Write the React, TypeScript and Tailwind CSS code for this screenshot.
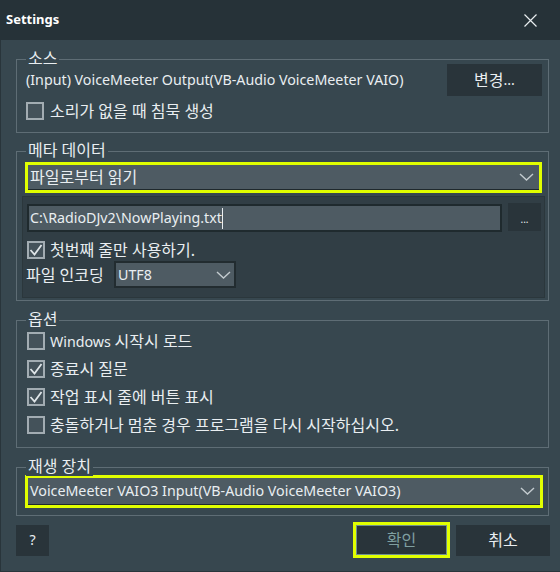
const FONT = "font-['Noto_Sans','Noto_Sans_CJK_KR',sans-serif]";

// Hangul in the reference runs a bit larger than the Latin text
function K({ children }: { children: React.ReactNode }) {
  return <span className="text-[16px]">{children}</span>;
}

function Check({ checked }: { checked?: boolean }) {
  return (
    <div className="w-[18px] h-[18px] shrink-0 border-2 border-[#a2acb2] bg-[#44525a] flex items-center justify-center">
      {checked && (
        <svg width="14" height="14" viewBox="0 0 14 14">
          <polyline points="1.5,7 5.5,11.5 12.5,2" fill="none" stroke="#dfe5e8" strokeWidth="1.8" />
        </svg>
      )}
    </div>
  );
}

function Chevron() {
  return (
    <svg width="15" height="8" viewBox="0 0 15 8" className="shrink-0">
      <polyline points="1,1 7.5,7 14,1" fill="none" stroke="#c3cbcf" strokeWidth="1.4" />
    </svg>
  );
}

function Group({ title, className, children }: { title: string; className?: string; children: React.ReactNode }) {
  return (
    <div className={`relative border border-[#5e6d75] ${className ?? ""}`}>
      <span className="absolute left-[9px] -top-[11px] px-[2px] bg-[#37474f] leading-[19px] text-[16px]">{title}</span>
      {children}
    </div>
  );
}

function YellowSelect({ children, className }: { children: React.ReactNode; className?: string }) {
  return (
    <div className={`border-[3px] border-[#e1ff00] ${className ?? ""}`}>
      <div className="h-full bg-[#4e5b63] border-b border-[#1f292d] flex items-center justify-between pl-[2px] pr-[5px]">
        <span>{children}</span>
        <Chevron />
      </div>
    </div>
  );
}

export default function App() {
  return (
    <div className={`w-[560px] h-[572px] flex flex-col text-[14.25px] text-[#e9eef1] ${FONT}`}>
      {/* title bar */}
      <div className="h-[40px] shrink-0 bg-[#263238] flex items-center justify-between pl-[6px] pr-[23px]">
        <span className="font-bold text-[13px] text-white">Settings</span>
        <svg width="13" height="13" viewBox="0 0 13 13">
          <path d="M0.5 0.5 L12.5 12.5 M12.5 0.5 L0.5 12.5" stroke="#e8edf0" strokeWidth="1.2" />
        </svg>
      </div>

      <div className="flex-1 bg-[#37474f] border-l border-b border-[#29353b] pl-[15px] pr-[11px]">
        {/* 소스 */}
        <Group title="소스" className="mt-[19px] pt-[4px] pb-[11px]">
          <div className="h-[32px] flex items-center justify-between pl-[9px] pr-[6px]">
            <span>(Input) VoiceMeeter Output(VB-Audio VoiceMeeter VAIO)</span>
            <div className="w-[95px] h-[32px] bg-[#29343a] flex items-center justify-center">
              <K>변경</K>...
            </div>
          </div>
          <div className="h-[20px] mt-[5px] flex items-center gap-[6px] pl-[9px]">
            <Check />
            <K>소리가 없을 때 침묵 생성</K>
          </div>
        </Group>

        {/* 메타 데이터 */}
        <Group title="메타 데이터" className="mt-[18px] pt-[10px] pb-[2px]">
          <YellowSelect className="h-[31px] ml-[8px] mr-[6px]">
            <K>파일로부터 읽기</K>
          </YellowSelect>
          <div className="mt-[3px] ml-[5px] mr-[3px] bg-[#313e45] border border-[#2b373c] pt-[6px] pb-[9px]">
            <div className="flex items-start gap-[6px] pl-[4px] pr-[3px]">
              <div className="flex-1 mt-[1px] h-[28px] bg-[#4e5b63] border-2 border-[#1f2a2e] flex items-center pl-[1px]">
                <span>C:\RadioDJv2\NowPlaying.txt</span>
                <span className="inline-block w-px h-[21px] bg-[#e9eef1]" />
              </div>
              <div className="w-[33px] h-[28px] bg-[#29343a] flex items-end justify-center pb-[4px] text-[10px]">...</div>
            </div>
            <div className="h-[20px] mt-[8px] flex items-center gap-[5px] pl-[4px]">
              <Check checked />
              <K>첫번째 줄만 사용하기.</K>
            </div>
            <div className="h-[27px] mt-[1px] flex items-center pl-[3px]">
              <span className="w-[88px]">
                <K>파일 인코딩</K>
              </span>
              <div className="w-[122px] h-[27px] bg-[#4e5b63] border-2 border-[#222c30] flex items-center justify-between pl-[2px] pr-[3px]">
                <span>UTF8</span>
                <Chevron />
              </div>
            </div>
          </div>
        </Group>

        {/* 옵션 */}
        <Group title="옵션" className="mt-[19px] pt-[6px] pb-[8px]">
          {[
            { latin: "Windows ", label: "시작시 로드", checked: false },
            { latin: "", label: "종료시 질문", checked: true },
            { latin: "", label: "작업 표시 줄에 버튼 표시", checked: true },
            { latin: "", label: "충돌하거나 멈춘 경우 프로그램을 다시 시작하십시오.", checked: false },
          ].map((o) => (
            <div key={o.label} className="h-[28px] flex items-center gap-[5px] pl-[10px]">
              <Check checked={o.checked} />
              <span className="whitespace-pre">
                {o.latin}
                <K>{o.label}</K>
              </span>
            </div>
          ))}
        </Group>

        {/* 재생 장치 */}
        <Group title="재생 장치" className="mt-[19px] pt-[7px] pb-[7px]">
          <YellowSelect className="h-[33px] ml-[8px] mr-[5px]">
            VoiceMeeter VAIO3 Input(VB-Audio VoiceMeeter VAIO3)
          </YellowSelect>
        </Group>

        {/* buttons */}
        <div className="mt-[6px] h-[36px] flex items-center justify-between">
          <div className="w-[33px] h-[31px] bg-[#29343a] flex items-center justify-center">?</div>
          <div className="flex items-center gap-[6px] -mr-[1px]">
            <div className="w-[97px] h-[36px] border-[3px] border-[#e1ff00]">
              <div className="h-full bg-[#29343a] border border-[#6f8f90] flex items-center justify-center text-[#7f9fa0]">
                <K>확인</K>
              </div>
            </div>
            <div className="w-[94px] h-[31px] bg-[#29343a] flex items-center justify-center">
              <K>취소</K>
            </div>
          </div>
        </div>
      </div>
    </div>
  );
}
